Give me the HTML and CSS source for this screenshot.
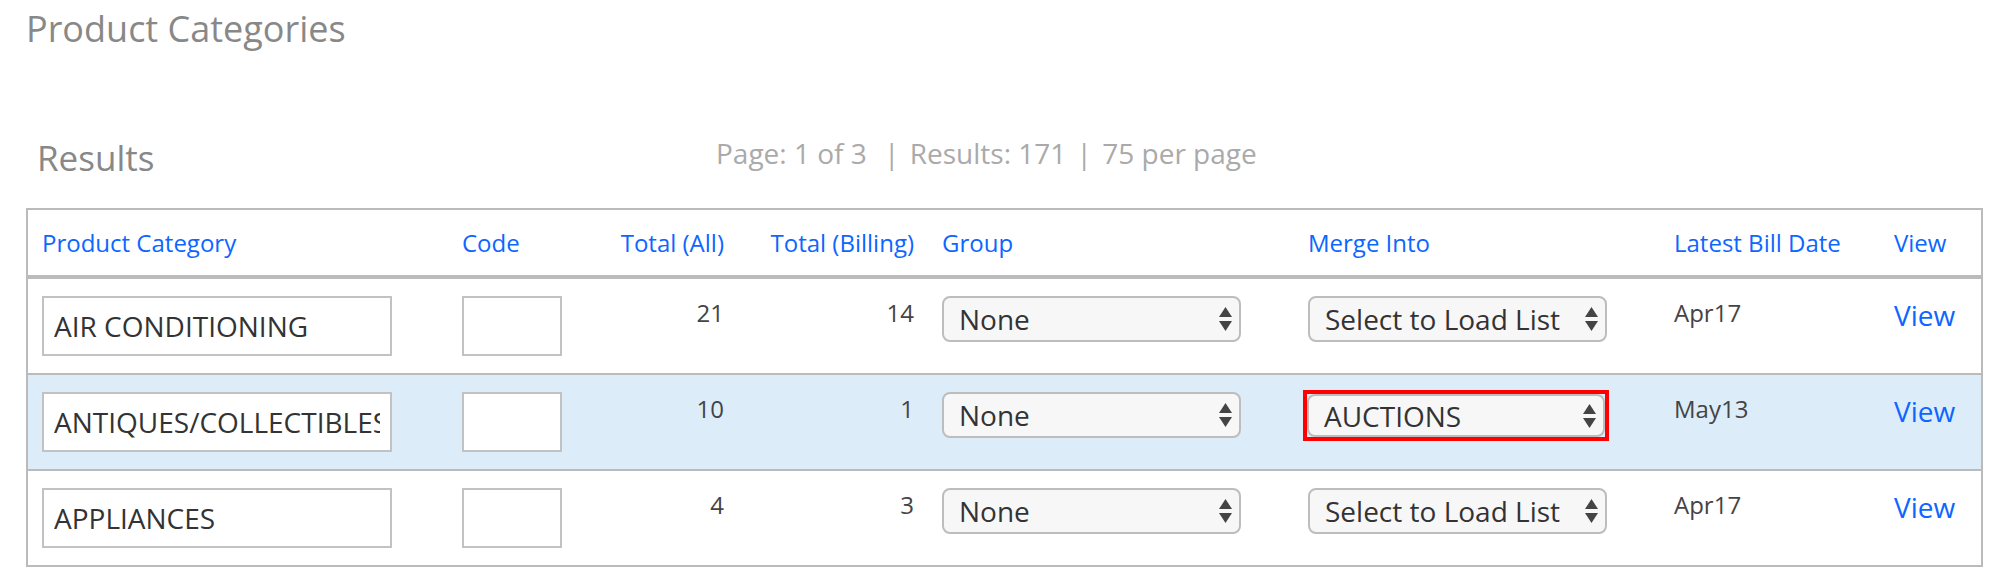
FILE: index.html
```html
<!DOCTYPE html>
<html lang="en">
<head>
  <meta charset="UTF-8">
  <meta name="viewport" content="width=device-width, initial-scale=1.0">
  <title>Product Categories</title>
  <link rel="stylesheet" href="styles.css">
</head>
<body>

  <div class="page">
    <h1 class="page-title">Product Categories</h1>

    <!-- Results header -->
    <div class="results-bar">
      <h2>Results</h2>
      <div class="paging">
        <span class="pg-page">Page: 1 of 3</span> <span class="sep">|</span> Results: 171 <span class="sep">|</span> 75 per page
      </div>
    </div>

    <!-- Category table -->
    <table class="results">
      <thead>
        <tr>
          <th class="c-name">Product Category</th>
          <th class="c-code">Code</th>
          <th class="c-all num">Total (All)</th>
          <th class="c-bill num">Total (Billing)</th>
          <th class="c-group">Group</th>
          <th class="c-merge">Merge Into</th>
          <th class="c-date">Latest Bill Date</th>
          <th class="c-view">View</th>
        </tr>
      </thead>
      <tbody>
        <tr>
          <td><input type="text" class="name-input" value="AIR CONDITIONING"></td>
          <td><input type="text" class="code-input" value=""></td>
          <td class="num">21</td>
          <td class="num">14</td>
          <td>
            <div class="pick">
              <select><option>None</option></select>
              <svg viewBox="0 0 13 24"><polygon points="6.5,0 13,10 0,10"/><polygon points="0,14 13,14 6.5,24"/></svg>
            </div>
          </td>
          <td>
            <div class="pick">
              <select><option>Select to Load List</option></select>
              <svg viewBox="0 0 13 24"><polygon points="6.5,0 13,10 0,10"/><polygon points="0,14 13,14 6.5,24"/></svg>
            </div>
          </td>
          <td>Apr17</td>
          <td class="view"><a href="#">View</a></td>
        </tr>
        <tr class="selected">
          <td><input type="text" class="name-input" value="ANTIQUES/COLLECTIBLES"></td>
          <td><input type="text" class="code-input" value=""></td>
          <td class="num">10</td>
          <td class="num">1</td>
          <td>
            <div class="pick">
              <select><option>None</option></select>
              <svg viewBox="0 0 13 24"><polygon points="6.5,0 13,10 0,10"/><polygon points="0,14 13,14 6.5,24"/></svg>
            </div>
          </td>
          <td>
            <div class="flagged">
              <div class="pick">
                <select><option>AUCTIONS</option></select>
                <svg viewBox="0 0 13 24"><polygon points="6.5,0 13,10 0,10"/><polygon points="0,14 13,14 6.5,24"/></svg>
              </div>
            </div>
          </td>
          <td>May13</td>
          <td class="view"><a href="#">View</a></td>
        </tr>
        <tr>
          <td><input type="text" class="name-input" value="APPLIANCES"></td>
          <td><input type="text" class="code-input" value=""></td>
          <td class="num">4</td>
          <td class="num">3</td>
          <td>
            <div class="pick">
              <select><option>None</option></select>
              <svg viewBox="0 0 13 24"><polygon points="6.5,0 13,10 0,10"/><polygon points="0,14 13,14 6.5,24"/></svg>
            </div>
          </td>
          <td>
            <div class="pick">
              <select><option>Select to Load List</option></select>
              <svg viewBox="0 0 13 24"><polygon points="6.5,0 13,10 0,10"/><polygon points="0,14 13,14 6.5,24"/></svg>
            </div>
          </td>
          <td>Apr17</td>
          <td class="view"><a href="#">View</a></td>
        </tr>
      </tbody>
    </table>
  </div>

</body>
</html>
```

FILE: styles.css
```css
body {
  font-family: "Open Sans", Arial, sans-serif;
  margin: 0;
  padding: 0;
  background-color: #fff;
  color: #333;
}

.page {
  padding: 5px 0 0 26px;
}

.page-title {
  margin: 0 0 81px 0;
  font-size: 36px;
  line-height: 48px;
  font-weight: normal;
  color: #888;
}

/* Results header */
.results-bar {
  display: flex;
  align-items: flex-start;
  height: 48px;
  margin-bottom: 26px;
  padding-left: 11px;
}

.results-bar h2 {
  margin: 0;
  width: 679px;
  font-size: 35px;
  line-height: 48px;
  font-weight: normal;
  color: #888;
}

.paging {
  margin-top: -1px;
  font-size: 28px;
  line-height: 40px;
  color: #aaa;
  white-space: nowrap;
}

.pg-page {
  margin-right: 7px;
}

.sep {
  margin: 0 3px;
}

/* Table */
.results {
  box-sizing: border-box;
  width: 1957px;
  table-layout: fixed;
  border-collapse: separate;
  border-spacing: 0;
  border: 2px solid #bbb;
}

.results th {
  box-sizing: border-box;
  padding: 16px 14px;
  font-size: 24px;
  line-height: 33px;
  font-weight: normal;
  color: #0d66ff;
  text-align: left;
  white-space: nowrap;
  border-bottom: 2px solid #bbb;
}

.c-name { width: 420px; }
.c-code { width: 152px; }
.c-all { width: 138px; }
.c-bill { width: 190px; }
.c-group { width: 366px; }
.c-merge { width: 366px; }
.c-date { width: 220px; }
.c-view { width: 101px; }

.results td {
  padding: 17px 14px;
  vertical-align: top;
  border-top: 2px solid #bbb;
  font-size: 24px;
  line-height: 33px;
  color: #444;
}

.results .num {
  text-align: right;
}

.results tr.selected td {
  background-color: #dcedf9;
}

.results td.view {
  font-size: 28px;
  line-height: 38px;
}

.view a {
  color: #0d66ff;
  text-decoration: none;
}

/* Inputs */
.name-input,
.code-input {
  display: block;
  box-sizing: border-box;
  height: 60px;
  padding: 0 10px;
  border: 2px solid #c2c2c2;
  border-radius: 0;
  background: #fff;
  font-family: "Open Sans", Arial, sans-serif;
  font-size: 28px;
  color: #333;
  outline: none;
}

.name-input {
  width: 350px;
}

.code-input {
  width: 100px;
}

/* Select boxes */
.pick {
  display: flex;
  align-items: center;
  box-sizing: border-box;
  width: 299px;
  height: 46px;
  border: 2px solid #bdbdbd;
  border-radius: 8px;
  background-color: #f7f7f7;
}

.pick select {
  -webkit-appearance: none;
  appearance: none;
  flex: 1;
  min-width: 0;
  height: 100%;
  padding: 0 0 0 15px;
  border: 0;
  background: transparent;
  font-family: "Open Sans", Arial, sans-serif;
  font-size: 28px;
  color: #333;
  outline: none;
}

.pick svg {
  flex: none;
  width: 13px;
  height: 24px;
  margin-right: 7px;
  fill: #444;
}

.flagged {
  box-sizing: border-box;
  width: 306px;
  height: 51px;
  margin: -2px 0 0 -5px;
  border: 4px solid #f00;
}

.flagged .pick {
  width: 100%;
  height: 100%;
}
```
